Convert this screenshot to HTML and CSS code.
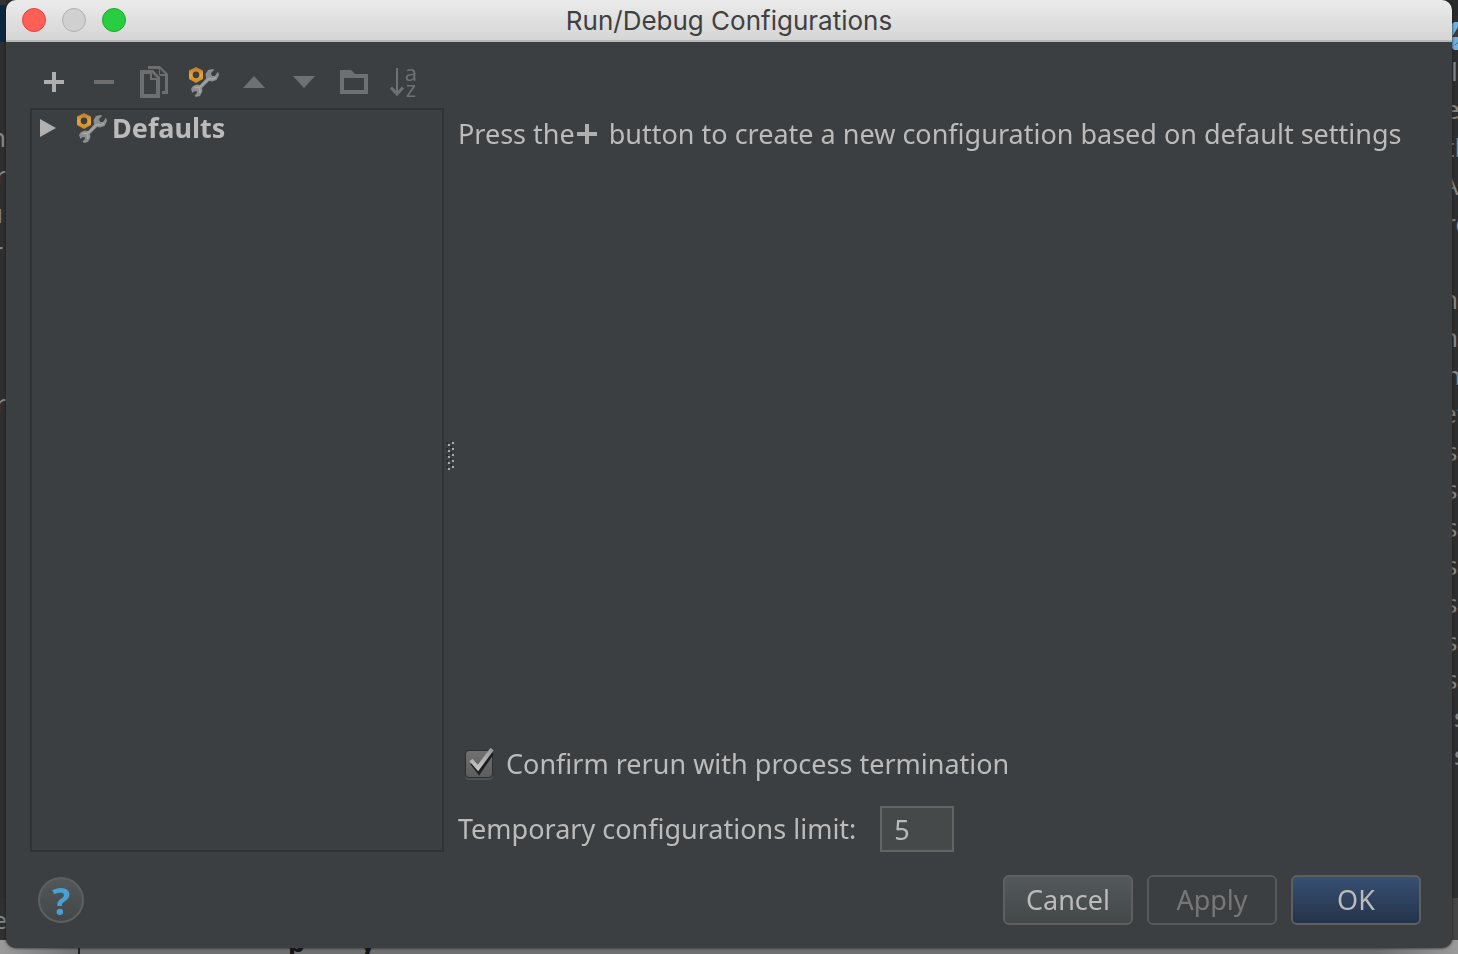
FILE: index.html
```html
<!DOCTYPE html>
<html lang="en">
<head>
<meta charset="utf-8">
<title>Run/Debug Configurations</title>
<link rel="stylesheet" href="styles.css">
</head>
<body>
<svg width="0" height="0" class="defs" aria-hidden="true">
  <defs>
    <linearGradient id="nut" x1="0" y1="0" x2="0" y2="1"><stop offset="0" stop-color="#b8742c"/><stop offset=".5" stop-color="#e6a63a"/><stop offset="1" stop-color="#c8862c"/></linearGradient>
    <linearGradient id="tick" x1="0" y1="0" x2="0" y2="1"><stop offset="0" stop-color="#9a9a9a"/><stop offset="1" stop-color="#c4c4c4"/></linearGradient>
    <symbol id="tools" viewBox="0 0 32 32">
      <path d="M30 5.500 L31 9 L28.500 14 L24 15.500 L21 15 L14 22 L14.500 25 L12 30 L8 31 L6.500 29.500 L9 27 L8.500 25 L6 25.500 L4.500 27 L3 23 L5 20 L9 18.500 L12 19 L18 12.500 L17.500 8 L20 4 L25 3 L26 4 L23 7 L24 10 L27 10 Z" fill="#8c8d8e"/>
      <path d="M28 11 L25.500 13 L21 12.500 L11.500 21.500 L6 21.500 M11.500 22 L12 27" fill="none" stroke="#a7a7a7" stroke-width="1.500"/>
      <path d="M8 1 L15 4.500 V13 L8 17 L1 13 V4.500 Z M8 5.500 A3.300 3.300 0 1 0 8 12.200 A3.300 3.300 0 1 0 8 5.500 Z" fill="url(#nut)" fill-rule="evenodd"/>
    </symbol>
  </defs>
</svg>

<div class="backdrop" aria-hidden="true">
  <div class="editor">
    <div class="edge edge-left">
      <span class="selection"></span>
      <div class="lines lines-left"><p></p><p>n</p><p>r</p><p class="cut">u</p><p class="cut">r</p><p></p><p></p><p></p><p>r</p></div>
    </div>
    <div class="edge edge-right">
      <svg class="tab-icon" width="6" height="28" viewBox="0 0 6 28"><path d="M2 0H6V28H2L0 26V2Z" fill="#6fb0dc"/><path d="M0 15L6 5V15Z" fill="#3d3b3b"/><path d="M3 23L6 20" stroke="#3e6f94"/></svg>
      <div class="lines lines-right"><p class="in">l</p><p>e</p><p>th</p><p class="cut">A</p><p>re</p><p></p><p class="cut">n</p><p class="cut">n'</p><p>n</p><p class="cut">et</p><p>s</p><p>s</p><p>s</p><p>s</p><p>s</p><p>s</p><p>s</p><p class="far">s</p><p class="far">s</p></div>
    </div>
  </div>
  <div class="status"><span>e</span></div>
  <div class="page-below"><span class="rule"></span><b class="p">p</b><b>y</b></div>
</div>

<main class="dialog" role="dialog" aria-labelledby="dialog-title">
  <header class="titlebar">
    <div class="lights">
      <button class="light close" aria-label="Close"></button>
      <button class="light minimize" aria-label="Minimize" disabled></button>
      <button class="light expand" aria-label="Zoom"></button>
    </div>
    <h1 id="dialog-title">Run/Debug Configurations</h1>
    <div></div>
  </header>

  <div class="content">
    <div class="toolbar">
      <button aria-label="Add"><svg viewBox="0 0 32 32"><path d="M6 16H26M16 6V26" stroke="#afafaf" stroke-width="4"/></svg></button>
      <button aria-label="Remove"><svg viewBox="0 0 32 32"><path d="M6 16H26" stroke="#6f6e6d" stroke-width="4"/></svg></button>
      <button aria-label="Copy"><svg viewBox="0 0 32 32"><path d="M10 0H22L30 8V28H24V25H27V10H21V3H18L15 3H10Z" fill="#6d6e6f"/><path d="M22 3V8H27Z" fill="#3c3f41"/><path d="M1 3H16L23 11V33H1Z" fill="#3c3f41"/><path d="M2 4H15L22 11V32H2ZM6 8V28H18V14H12V8ZM14 7V12H19Z" fill="#6d6e6f" fill-rule="evenodd"/></svg></button>
      <button aria-label="Edit defaults"><svg viewBox="0 0 32 32"><use href="#tools"/></svg></button>
      <button aria-label="Move up"><svg viewBox="0 0 32 32"><path d="M5 22L16 10L27 22Z" fill="#6f7071"/></svg></button>
      <button aria-label="Move down"><svg viewBox="0 0 32 32"><path d="M5 10H27L16 22Z" fill="#6f7071"/></svg></button>
      <button aria-label="Create folder"><svg viewBox="0 0 32 32"><path d="M2 4H13L17 8H30V28H2ZM6 12V24H26V12Z" fill="#6f7071" fill-rule="evenodd"/></svg></button>
      <button aria-label="Sort" class="sort"><svg viewBox="0 0 32 32"><path d="M9 2V28" stroke="#6f7071" stroke-width="2"/><path d="M3 21.500L9 28L15 21.500" fill="none" stroke="#6f7071" stroke-width="3"/></svg><span class="az"><span>a</span><span>z</span></span></button>
    </div>

    <div class="panes">
      <div class="tree" role="tree">
        <div class="node" role="treeitem" aria-expanded="false">
          <svg class="arrow" width="16" height="18" viewBox="0 0 16 18"><path d="M0 0L16 9L0 18Z" fill="#b0b0b0"/></svg>
          <svg class="tools" width="32" height="32"><use href="#tools"/></svg>
          <span>Defaults</span>
        </div>
      </div>
      <div class="splitter">
        <svg width="8" height="30" viewBox="0 0 8 30">
          <g fill="#292b2c"><path d="M0 1h2v2H0zM0 7h2v2H0zM0 13h2v2H0zM0 19h2v2H0zM0 25h2v2H0zM4 0h2v1H4zM4 5h2v2H4zM4 11h2v2H4zM4 17h2v2H4zM4 23h2v2H4z"/></g>
          <g fill="#a9a9a9"><path d="M2 3h2v2H2zM2 9h2v2H2zM2 15h2v2H2zM2 21h2v2H2zM2 27h2v2H2zM6 1h2v2H6zM6 7h2v2H6zM6 13h2v2H6zM6 19h2v2H6zM6 25h2v2H6z"/></g>
        </svg>
      </div>
      <section class="details">
        <p class="hint"><span>Press the</span><svg width="20" height="20" viewBox="0 0 20 20" role="img" aria-label="plus"><path d="M0 10H20M10 0V20" stroke="#afafaf" stroke-width="4"/></svg><span class="rest">button to create a new configuration based on default settings</span></p>
        <div class="options">
          <label class="check" for="confirm">
            <span class="box"><input type="checkbox" id="confirm" checked><svg width="32" height="32" viewBox="0 0 32 32"><path d="M8 15L15 24L28 5" fill="none" stroke="#1e1f20" stroke-width="4"/><path d="M7 12L14 20L28 1" fill="none" stroke="url(#tick)" stroke-width="4"/></svg></span>
            <span>Confirm rerun with process termination</span>
          </label>
          <div class="limit">
            <label for="limit">Temporary configurations limit:</label>
            <input type="text" id="limit" value="5">
          </div>
        </div>
      </section>
    </div>

    <footer class="footer">
      <button class="help" aria-label="Help"><span>?</span></button>
      <div class="actions">
        <button class="btn">Cancel</button>
        <button class="btn disabled" disabled>Apply</button>
        <button class="btn primary">OK</button>
      </div>
    </footer>
  </div>
</main>
</body>
</html>
```
FILE: styles.css
```css
* { box-sizing: border-box; }

body {
  margin: 0;
  min-height: 100vh;
  background: #2e2f30;
  color: #bbbbbb;
  font: 27px/32px "Noto Sans", "Open Sans", sans-serif;
}

p, h1 { margin: 0; }
button, input { font: inherit; color: inherit; margin: 0; padding: 0; }
button { border: 0; background: none; }
.defs { position: absolute; }

/* Content visible around the dialog */
.backdrop {
  position: fixed;
  inset: 0;
  display: flex;
  flex-direction: column;
  overflow: hidden;
  color: #858687;
}
.editor { flex: 1; display: flex; justify-content: space-between; min-height: 0; background: #2d2e2f; }
.edge { width: 14px; overflow: hidden; }
.edge-left { width: 6px; border-top: 5px solid #333435; }
.edge-right { padding-left: 8px; border-top: 16px solid #292a2b; }
.selection { display: block; height: 37px; background: #0b2740; }
.tab-icon { display: block; margin-top: 6px; }
.lines { line-height: 38px; font-size: 26px; }
.lines p { height: 38px; width: 6px; overflow: hidden; white-space: nowrap; display: flex; }
.lines-left { margin-top: 38px; }
.lines-left p { justify-content: flex-end; }
.lines-left .cut { padding-right: 3px; }
.lines-right { margin-top: 2px; }
.lines-right p { text-indent: -7px; }
.lines-right .cut { text-indent: -10px; }
.lines-right .in { text-indent: -1px; }
.lines-right .far { text-indent: 2px; }
.status { height: 42px; padding-top: 6px; background: linear-gradient(90deg, #2f3031 50%, #454545 50%); font-size: 24px; }
.status span { display: flex; justify-content: flex-end; width: 7px; overflow: hidden; }
.page-below {
  display: flex;
  align-items: flex-end;
  height: 14px;
  overflow: hidden;
  color: #151515;
  line-height: 24px;
  background: linear-gradient(90deg, #9a9a9a 0, #707070 80px, #707070 calc(100% - 80px), #9a9a9a 100%);
}
.page-below .rule { width: 2px; height: 14px; margin-left: 78px; background: #222222; }
.page-below .p { width: 72px; margin-left: 208px; }

/* Dialog window */
.dialog {
  position: relative;
  display: flex;
  flex-direction: column;
  min-height: calc(100vh - 6px);
  margin: 0 6px 6px;
  overflow: hidden;
  border-radius: 10px;
  background: #3c3f41;
  box-shadow: 0 0 3px #1c1c1c;
}
.titlebar {
  display: grid;
  grid-template-columns: 1fr auto 1fr;
  align-items: center;
  height: 42px;
  padding: 0 16px;
  border-bottom: 2px solid #b8b8b8;
  background: linear-gradient(#ebebeb, #d5d5d5);
}
.titlebar h1 { padding-top: 2px; color: #404040; font: 400 26px/32px Inter, Roboto, sans-serif; }
.lights { display: flex; gap: 16px; }
.light { width: 24px; height: 24px; border: 1px solid #e0443e; border-radius: 50%; background: #ff5f57; }
.light.minimize { border-color: #b0b0b0; background: #d0d0d0; }
.light.expand { border-color: #1aab29; background: #28cd41; }

.content { flex: 1; display: flex; flex-direction: column; padding: 24px 31px 23px 24px; }
.toolbar { display: flex; gap: 18px; padding-left: 8px; }
.toolbar button { display: block; width: 32px; height: 32px; }
.toolbar svg { display: block; width: 32px; height: 32px; }
.toolbar .sort { position: relative; }
.az { position: absolute; right: 3px; top: -2px; display: grid; color: #6f7071; font-size: 22px; line-height: 16px; }

.panes { flex: 1; display: flex; margin-top: 10px; }
.tree { width: 414px; border: 2px solid #323232; }
.node { display: flex; align-items: center; gap: 4px; height: 36px; padding-left: 8px; font-weight: 700; }
.node .arrow { margin-right: 16px; }
.splitter { display: flex; align-items: center; width: 14px; padding: 0 2px 48px; }
.details { flex: 1; display: flex; flex-direction: column; justify-content: space-between; min-width: 0; }
.hint { display: flex; align-items: center; padding-top: 10px; gap: 2px; white-space: nowrap; }
.hint .rest { padding-left: 10px; }

.options { display: flex; flex-direction: column; gap: 26px; }
.check { display: flex; align-items: center; gap: 10px; padding-left: 6px; }
.box { position: relative; display: flex; width: 32px; height: 32px; }
.box input {
  appearance: none;
  width: 28px;
  height: 28px;
  margin: 2px 0 0 1px;
  border: 1px solid #2d2e2f;
  border-radius: 4px;
  background: linear-gradient(#707070, #5d5d5d);
  box-shadow: 0 2px 0 #505354;
}
.box svg { position: absolute; left: 0; top: 0; pointer-events: none; }
.limit { display: flex; align-items: center; gap: 24px; }
.limit input { width: 74px; height: 46px; padding: 0 12px; border: 2px solid #646464; background: #45494a; outline: 0; }

.footer { display: flex; align-items: center; justify-content: space-between; margin-top: 23px; padding-left: 8px; }
.help {
  width: 46px;
  height: 46px;
  border: 2px solid #5e6060;
  border-radius: 50%;
  background: linear-gradient(#525859, #424748);
  color: #4a9fd4;
  font-size: 38px;
  font-weight: 700;
  line-height: 40px;
}
.actions { display: flex; gap: 14px; }
.btn { width: 130px; height: 50px; border: 2px solid #5e6060; border-radius: 6px; background: linear-gradient(#53595b, #434849); }
.btn.disabled { border-color: #565859; background: none; color: #777777; }
.btn.primary { background: linear-gradient(#375073, #243349); }
```
